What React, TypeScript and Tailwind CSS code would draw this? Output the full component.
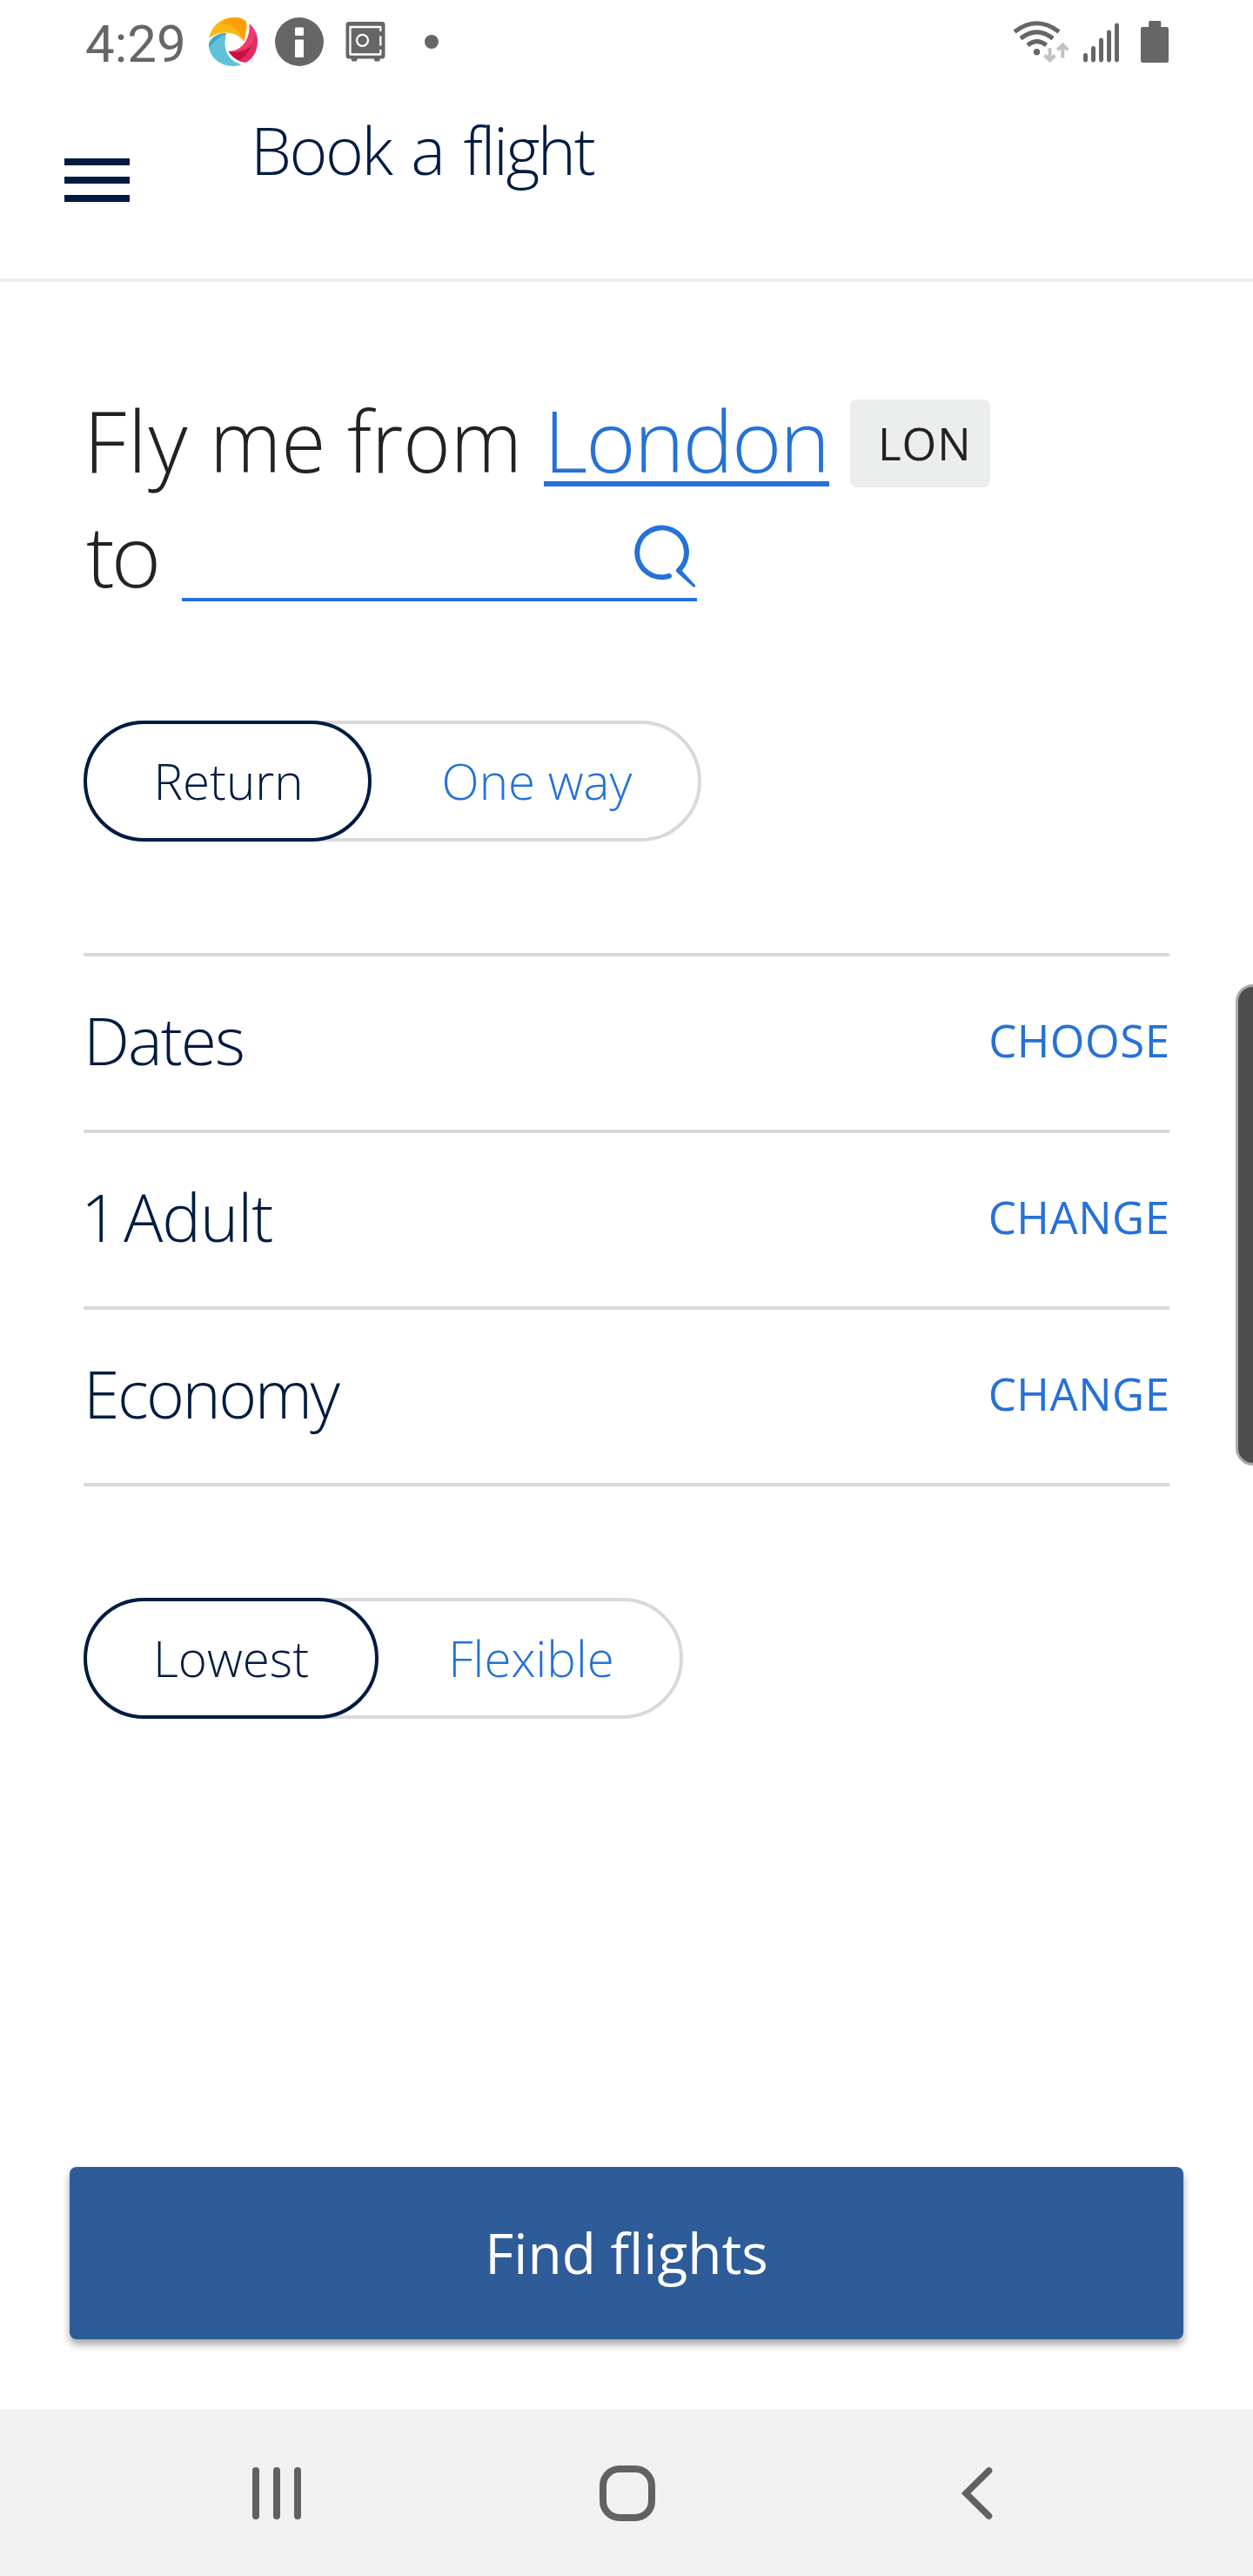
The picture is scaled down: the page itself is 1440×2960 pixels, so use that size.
import type { ReactNode } from "react";

function LogoIcon() {
  return (
    <svg width="56" height="56" viewBox="0 0 56 56" className="overflow-visible">
      <path d="M.5 23.500C3 10 14 0 29 0C34 0 40 1.500 42.500 4.500C45 9 42 18 40.500 27.500C31 15 14 14 .5 23.500Z" fill="#ffb90f" />
      <path d="M30 0C36 0 40 1.500 42.500 4.500C45 9 42 18 40.500 27.500C36 17 29 9 14 7C19 2 24 .5 30 0Z" fill="#ff9f0a" />
      <path d="M14 7C23 6 35 13 40.500 27.500C31 15 14 14 .5 23.500C4 15 8 10 14 7Z" fill="#fcb913" />
      <path d="M46.500 7C52 12 56 18 56 27C56 38 51 47 43 51.500C35 52 29 47 22.500 39C38 39 48 25 46.500 7Z" fill="#ef3a70" />
      <path d="M22.500 39C36 42 48 36 54.500 20C58 34 53 46 43 51.500C35 52 29 47 22.500 39Z" fill="#e52c61" />
      <path d="M22.500 39C32 42 43 38 49 33C45 42 39 48 34 49C29 47 26 44 22.500 39Z" fill="#c8103f" />
      <path d="M20.500 18C10 18 3 23 0 30C-1 45 13 56 28 56C32 56 35 55 37.500 54C21 50 15 35 20.500 18Z" fill="#60c1da" />
      <path d="M20.500 18C10 18 3 23 0 30V35C5 29 11 23 20.500 18Z" fill="#41a9c4" />
      <text x="48" y="52.500" fontSize="4" fill="#ef3a70" fontFamily="Roboto">™</text>
    </svg>
  );
}

function InfoIcon() {
  return (
    <svg width="56" height="56" viewBox="0 0 56 56">
      <circle cx="28" cy="28" r="28" fill="#666" />
      <rect x="23" y="11.500" width="10" height="9.500" rx="1" fill="#fff" />
      <rect x="23" y="25.500" width="10" height="20.500" rx="1" fill="#fff" />
    </svg>
  );
}

function SafeIcon() {
  return (
    <svg width="46" height="46" viewBox="0 0 46 46">
      <path d="M4 0H42a3.500 3.500 0 0 1 3.500 3.500V39a3.500 3.500 0 0 1-3.500 3.500H40L39 45.500H34L32.500 42.500H14L12.500 45.500H7.500L6.500 42.500H4A3.500 3.500 0 0 1 .5 39V3.500A3.500 3.500 0 0 1 4 0Z" fill="#666" />
      <path d="M40.300 11V6H5.500V37.500H40.300V32" fill="none" stroke="#fff" strokeWidth="2.300" strokeLinejoin="round" />
      <path d="M40.300 16.500V27.500" stroke="#fff" strokeWidth="2.300" />
      <circle cx="19.500" cy="21.300" r="6.500" fill="none" stroke="#fff" strokeWidth="2.300" />
    </svg>
  );
}

function WifiIcon() {
  return (
    <svg width="66" height="48" viewBox="0 0 66 48" fill="none" stroke="#666" strokeWidth="5">
      <path d="M2 12.500Q27.500 -7 53 12.500" />
      <path d="M9 20.200Q27.500 5.500 46 20.200" />
      <path d="M17 28Q27.500 19.200 38.500 28" />
      <circle cx="27.500" cy="35.700" r="3.700" fill="#666" stroke="none" />
      <g stroke="#c2c2c2" strokeWidth="4">
        <path d="M42.500 31V45M36.500 39.500L42.500 45.500L48.500 39.500" />
        <path d="M57.300 42.500V28M51.300 33.500L57.300 27.500L63.300 33.500" />
      </g>
    </svg>
  );
}

function SignalIcon() {
  return (
    <svg width="41" height="46" viewBox="0 0 41 46" fill="#666">
      <rect x="0" y="35" width="5" height="10.500" rx="2.400" />
      <rect x="9" y="27" width="5" height="18.500" rx="2.400" />
      <rect x="18" y="17.500" width="5" height="28" rx="2.400" />
      <rect x="27" y="8.500" width="5" height="37" rx="2.400" />
      <rect x="36" y="0.500" width="5" height="45" rx="2.400" />
    </svg>
  );
}

function BatteryIcon() {
  return (
    <svg width="32" height="48" viewBox="0 0 32 48" fill="#666">
      <path d="M10.500 0H22a1.300 1.300 0 0 1 1.300 1.300V7H30a2 2 0 0 1 2 2V45.500a2.500 2.500 0 0 1-2.500 2.500H2.500A2.500 2.500 0 0 1 0 45.500V9a2 2 0 0 1 2-2H9.200V1.300A1.300 1.300 0 0 1 10.500 0Z" />
    </svg>
  );
}

function SearchIcon() {
  return (
    <svg width="72" height="74" viewBox="0 0 72 74" fill="none">
      <path d="M40 60.900A28.400 28.400 0 1 1 51 54.500" stroke="#2571d7" strokeWidth="6" strokeLinecap="round" />
      <path d="M48.600 56.500L53.400 53.200L70.300 71.700Q70.500 74 68 73.700Z" fill="#2571d7" />
    </svg>
  );
}

function Toggle({ className, activeClass, active, other }: { className: string; activeClass: string; active: string; other: string }) {
  return (
    <div className={`flex h-[139px] rounded-full border-4 border-[#d8d9dd] text-[56.500px] font-light leading-[80px] ${className}`}>
      <div className={`-m-1 flex h-[139px] shrink-0 items-center justify-center rounded-full border-4 border-[#001b41] text-[#001b41] ${activeClass}`}>
        {active}
      </div>
      <div className="flex flex-1 items-center justify-center pl-[9px] text-[#2571d7]">{other}</div>
    </div>
  );
}

function Row({ children, action }: { children: ReactNode; action: string }) {
  return (
    <div className="flex h-[203px] items-center justify-between border-t-4 border-[#d8d9dd] pb-2 leading-[100px]">
      <div className="text-[75px] font-light text-[#001b41]">{children}</div>
      <div className="-mr-[0.500px] text-[51px] font-[370] tracking-[0.500px] text-[#2571d7]">{action}</div>
    </div>
  );
}

export default function App() {
  return (
    <div className="relative flex h-[2960px] w-[1440px] flex-col overflow-hidden bg-white font-['Open_Sans',sans-serif]">
      <div className="flex h-24 items-center justify-between pl-[98px] pr-[97px]">
        <div className="flex items-center">
          <div className="w-[142px] pt-[5px] font-['Roboto',sans-serif] text-[60px] leading-[80px] text-[#666]">4:29</div>
          <LogoIcon />
          <div className="ml-5"><InfoIcon /></div>
          <div className="ml-[25px]"><SafeIcon /></div>
          <div className="ml-[45px] size-4 rounded-full bg-[#666]" />
        </div>
        <div className="flex items-end">
          <WifiIcon />
          <div className="ml-[15px]"><SignalIcon /></div>
          <div className="ml-[25px]"><BatteryIcon /></div>
        </div>
      </div>

      <header className="flex h-[228px] items-start border-b-4 border-[#ebeeed] pl-[74px]">
        <div className="mt-[86px] flex w-[75px] flex-col gap-[13px]">
          <div className="h-2 bg-[#001b41]" />
          <div className="h-2 bg-[#001b41]" />
          <div className="h-2 bg-[#001b41]" />
        </div>
        <h1 className="ml-[139px] mt-9 whitespace-nowrap text-[75px] font-light leading-[80px] tracking-[-2.500px] text-[#001b41] [word-spacing:6px]">Book a flight</h1>
      </header>

      <main className="px-24 pt-[115px]">
        <div className="flex h-[132px] items-start whitespace-nowrap text-[98px] font-light leading-[132px] text-[#222]">
          <div className="flex w-[529px]">
            <span className="w-[145px] tracking-[1.500px]">Fly</span>
            <span className="w-[158px] origin-left scale-x-[0.95]">me</span>
            <span className="origin-left scale-x-[0.95]">from</span>
          </div>
          <div className="h-[120px] w-[328px] border-b-[6px] border-[#2571d7] tracking-[-2px] text-[#2571d7]">London</div>
          <div className="ml-6 mt-5 h-[101px] w-[161px] rounded-lg bg-[#ebeeed] pl-8 text-[51px] font-[370] leading-[101px] tracking-[1px]">LON</div>
        </div>
        <div className="flex h-[132px] items-start text-[98px] font-light leading-[132px] text-[#222]">
          <div className="w-[113px] pl-[3px] tracking-[-4px]">to</div>
          <div className="flex h-[120px] w-[592px] items-end justify-end border-b-4 border-[#2571d7] pb-3">
            <SearchIcon />
          </div>
        </div>

        <Toggle className="mt-[125px] w-[710px]" activeClass="w-[331px] pl-0.5" active="Return" other="One way" />

        <div className="mt-32 border-b-4 border-[#d8d9dd]">
          <Row action="CHOOSE"><span className="tracking-[-2px]">Dates</span></Row>
          <Row action="CHANGE"><span className="-ml-[3px] tracking-[-1px] [word-spacing:-11px]">1 Adult</span></Row>
          <Row action="CHANGE"><span className="tracking-[-2.500px]">Economy</span></Row>
        </div>

        <Toggle className="mt-32 w-[689px]" activeClass="w-[339px]" active="Lowest" other="Flexible" />
      </main>

      <div className="mt-[515px] px-20">
        <button className="block h-[198px] w-full rounded-lg bg-[#2e5c99] text-center text-[64px] leading-[198px] text-white shadow-[0_6px_10px_rgba(0,0,0,0.350)]">Find flights</button>
      </div>

      <nav className="mt-20 flex h-48 items-center justify-between bg-[#f1f1f1] pl-[290px] pr-[299px] pt-0.5">
        <div className="flex h-[60px] gap-4">
          <div className="w-2 rounded-full bg-[#616161]" />
          <div className="w-2 rounded-full bg-[#616161]" />
          <div className="w-2 rounded-full bg-[#616161]" />
        </div>
        <div className="-ml-[10px] size-16 rounded-[23px] border-8 border-[#616161]" />
        <svg width="36" height="60" viewBox="0 0 36 60" fill="none" stroke="#616161" strokeWidth="7.500" strokeLinecap="round">
          <path d="M31.500 4L5 30L31.500 56" />
        </svg>
      </nav>

      <div className="absolute -right-5 top-[1131px] h-[553px] w-10 rounded-[20px] border-[3px] border-[#aaa] bg-[#4d4d4d]" />
    </div>
  );
}
